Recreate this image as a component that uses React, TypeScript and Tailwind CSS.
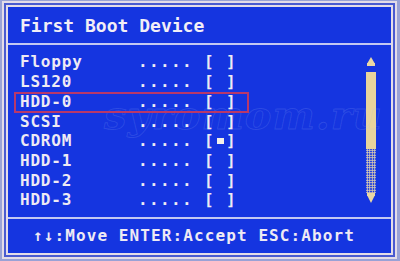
import React from 'react';

interface BootItem {
  label: string;
  selected?: boolean;
  marked?: boolean;
}

const items: BootItem[] = [
  { label: 'Floppy' },
  { label: 'LS120' },
  { label: 'HDD-0', marked: true },
  { label: 'SCSI' },
  { label: 'CDROM', selected: true },
  { label: 'HDD-1' },
  { label: 'HDD-2' },
  { label: 'HDD-3' },
];

const mono = "font-['DejaVu_Sans_Mono','Liberation_Mono',monospace] font-bold";

function Row({ item }: { item: BootItem }) {
  return (
    <div className="relative flex h-[19.7px] items-center pl-[12px] text-[16px] leading-none text-[#eeeaf4]">
      {item.marked && (
        <div className="absolute left-[6px] top-0 z-10 h-[21px] w-[235px] border-2 border-[#b8386a]" />
      )}
      <span className="w-[118px] tracking-[0.8px]">{item.label}</span>
      <span className="tracking-[1.37px]">.....</span>
      <span className="ml-[11px] flex items-center tracking-[1.37px]">
        <span>[</span>
        <span className="flex w-[11px] justify-center">
          {item.selected ? <span className="h-[6px] w-[7px] bg-[#f4f0e8]" /> : null}
        </span>
        <span>]</span>
      </span>
    </div>
  );
}

function ScrollBar() {
  return (
    <div className="flex w-[10px] flex-col items-center pt-[11px]">
      <svg width="10" height="12" viewBox="0 0 10 12">
        <path d="M5 1 L8.5 7 H1.5 Z" fill="#ead8a4" />
        <rect x="1" y="7" width="8" height="3" fill="#ead8a4" />
      </svg>
      <div className="mt-[4px] h-[77px] w-[10px] bg-[#e8d49c]" />
      <div className="h-[44px] w-[10px] bg-[radial-gradient(circle,#e0d0b0_0.9px,transparent_1.1px)] bg-[length:2.5px_2.5px]" />
      <svg width="10" height="11" viewBox="0 0 10 11">
        <rect x="1" y="0" width="8" height="3" fill="#ead8a4" />
        <path d="M1.5 3 H8.5 L5 10 Z" fill="#ead8a4" />
      </svg>
    </div>
  );
}

export default function App() {
  return (
    <div className={`h-[261px] w-[400px] overflow-hidden bg-[#9aa2d6] pb-[2px] pl-[2px] pr-[3px] pt-[1px] ${mono}`}>
      <div className="h-full border-2 border-[#e4dce8] bg-[#4a5ad0] p-[2px]">
        <div className="relative flex h-full flex-col border-2 border-[#e4dce8] bg-[#1535e0]">
          <div className="flex h-[36px] items-center pl-[12px] pt-[1px] text-[18px] leading-none text-[#f2eef6]">
            First Boot Device
          </div>
          <div className="h-[2px] bg-[#c4c8f2]" />
          <div className="relative flex flex-1">
            <div className="pointer-events-none absolute left-[96px] top-[50px] font-['DejaVu_Serif',serif] text-[40px] italic leading-none tracking-[1px] text-transparent [-webkit-text-stroke:1px_rgba(170,190,255,0.16)]">
              syromom.ru
            </div>
            <div className="flex-1 pt-[7.6px]">
              {items.map((item) => (
                <Row key={item.label} item={item} />
              ))}
            </div>
            <ScrollBar />
            <div className="w-[15px]" />
          </div>
          <div className="h-[2px] bg-[#c4c8f2]" />
          <div className="flex h-[34px] items-center pl-[25px] text-[16px] leading-none tracking-[1.1px] text-[#eeeaf4]">
            ↑↓:Move ENTER:Accept ESC:Abort
          </div>
        </div>
      </div>
    </div>
  );
}
